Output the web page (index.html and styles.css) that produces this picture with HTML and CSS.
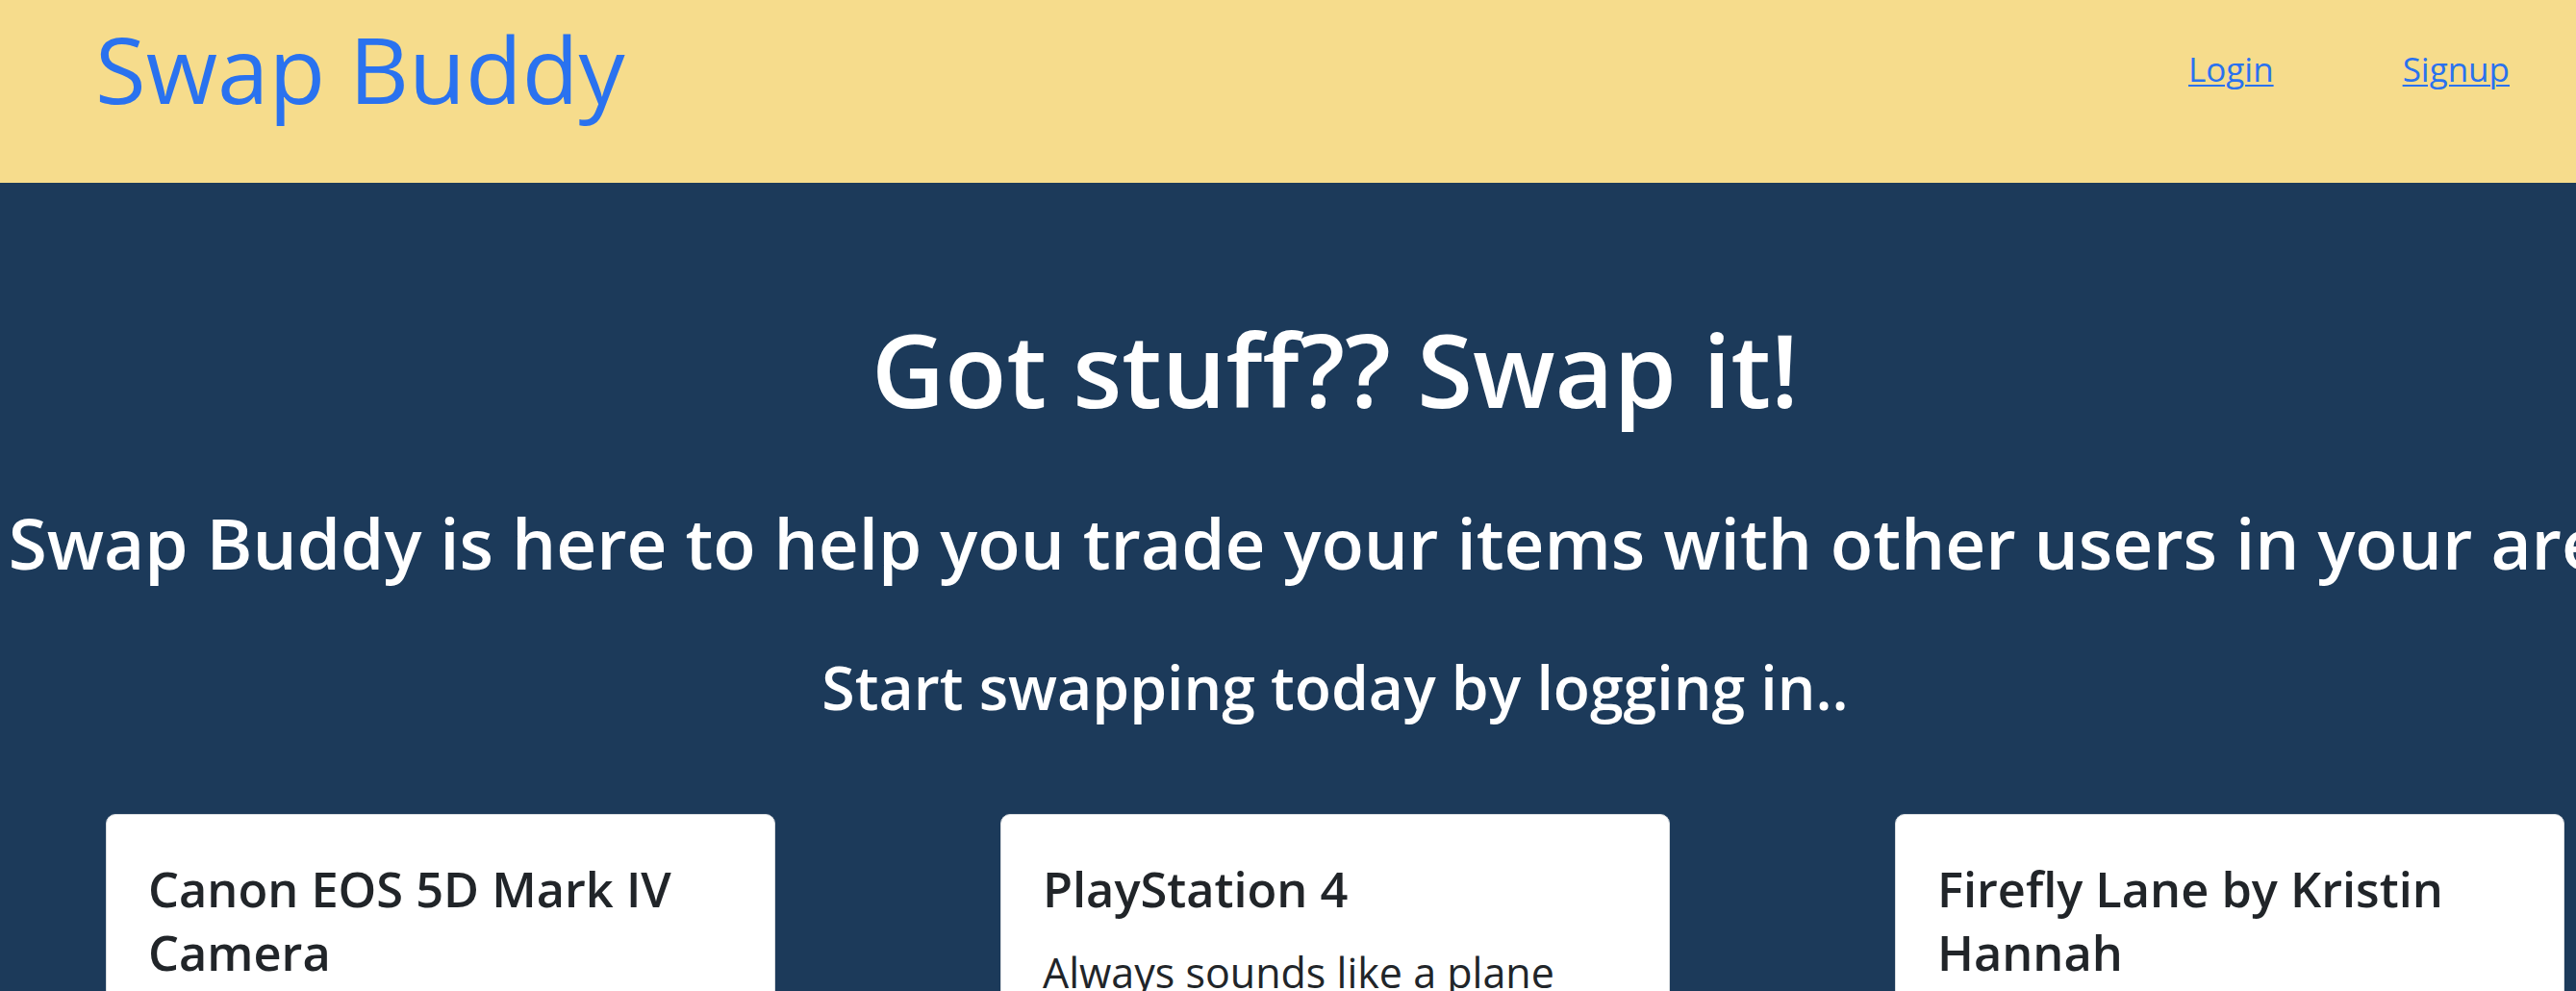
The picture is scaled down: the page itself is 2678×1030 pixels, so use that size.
FILE: index.html
```html
<!DOCTYPE html>
<html lang="en">
<head>
<meta charset="utf-8">
<title>Swap Buddy</title>
<link rel="stylesheet" href="styles.css">
</head>
<body>
<header class="topbar">
  <a class="brand" href="#">Swap Buddy</a>
  <nav class="nav">
    <a class="nav-link" href="#">Login</a>
    <a class="nav-link" href="#">Signup</a>
  </nav>
</header>
<main class="hero">
  <div class="hero-inner">
    <h1 class="hero-title">Got stuff?? Swap it!</h1>
    <h2 class="hero-lead">Swap Buddy is here to help you trade your items with other users in your area!</h2>
    <h3 class="hero-cta">Start swapping today by logging in..</h3>
    <div class="cards">
      <div class="card">
        <h4 class="card-title">Canon EOS 5D Mark IV Camera</h4>
        <p class="card-text">Great condition, barely used</p>
      </div>
      <div class="card">
        <h4 class="card-title">PlayStation 4</h4>
        <p class="card-text">Always sounds like a plane</p>
      </div>
      <div class="card">
        <h4 class="card-title">Firefly Lane by Kristin Hannah</h4>
        <p class="card-text">Read once, like new</p>
      </div>
    </div>
  </div>
</main>
</body>
</html>
```
FILE: styles.css
```css
html, body {
  margin: 0;
  padding: 0;
  overflow: hidden;
}
body {
  font-family: "Open Sans", "Noto Sans", sans-serif;
  background: #1c3a5a;
  color: #212529;
}
.topbar {
  height: 190px;
  box-sizing: border-box;
  background: #f6dc8c;
  display: flex;
  justify-content: space-between;
  align-items: flex-start;
  padding: 0 69px 0 99px;
}
.brand {
  margin-top: 13px;
  font-size: 96px;
  line-height: 1.2;
  font-weight: 400;
  color: #2a72ef;
  text-decoration: none;
}
.nav {
  display: flex;
  gap: 134px;
  margin-top: 51px;
}
.nav-link {
  font-size: 35px;
  line-height: 1.2;
  color: #2a72ef;
  text-decoration: underline;
  text-decoration-thickness: 2px;
  text-underline-offset: 3px;
}
.hero {
  width: 2776px;
  padding-top: 131px;
  color: #fff;
  text-align: center;
}
.hero-inner {
  display: flex;
  flex-direction: column;
  align-items: center;
}
.hero-title {
  margin: 0;
  font-size: 105px;
  line-height: 1.2;
  font-weight: 600;
}
.hero-lead {
  margin: 73px 0 0;
  font-size: 72.8px;
  line-height: 1.2;
  font-weight: 600;
  white-space: nowrap;
}
.hero-cta {
  margin: 68.5px 0 0;
  font-size: 62.5px;
  line-height: 1.2;
  font-weight: 600;
}
.cards {
  margin-top: 95px;
  display: grid;
  grid-template-columns: repeat(3, 696px);
  column-gap: 234px;
  justify-content: center;
  text-align: left;
}
.card {
  background: #fff;
  border: 1px solid #d9dcdf;
  border-radius: 10px;
  padding: 44px 43px 40px;
  color: #212529;
}
.card-title {
  margin: 0;
  font-size: 50.5px;
  line-height: 66px;
  font-weight: 600;
}
.card-text {
  margin: 24px 0 0;
  font-size: 43px;
  line-height: 60px;
}
```
